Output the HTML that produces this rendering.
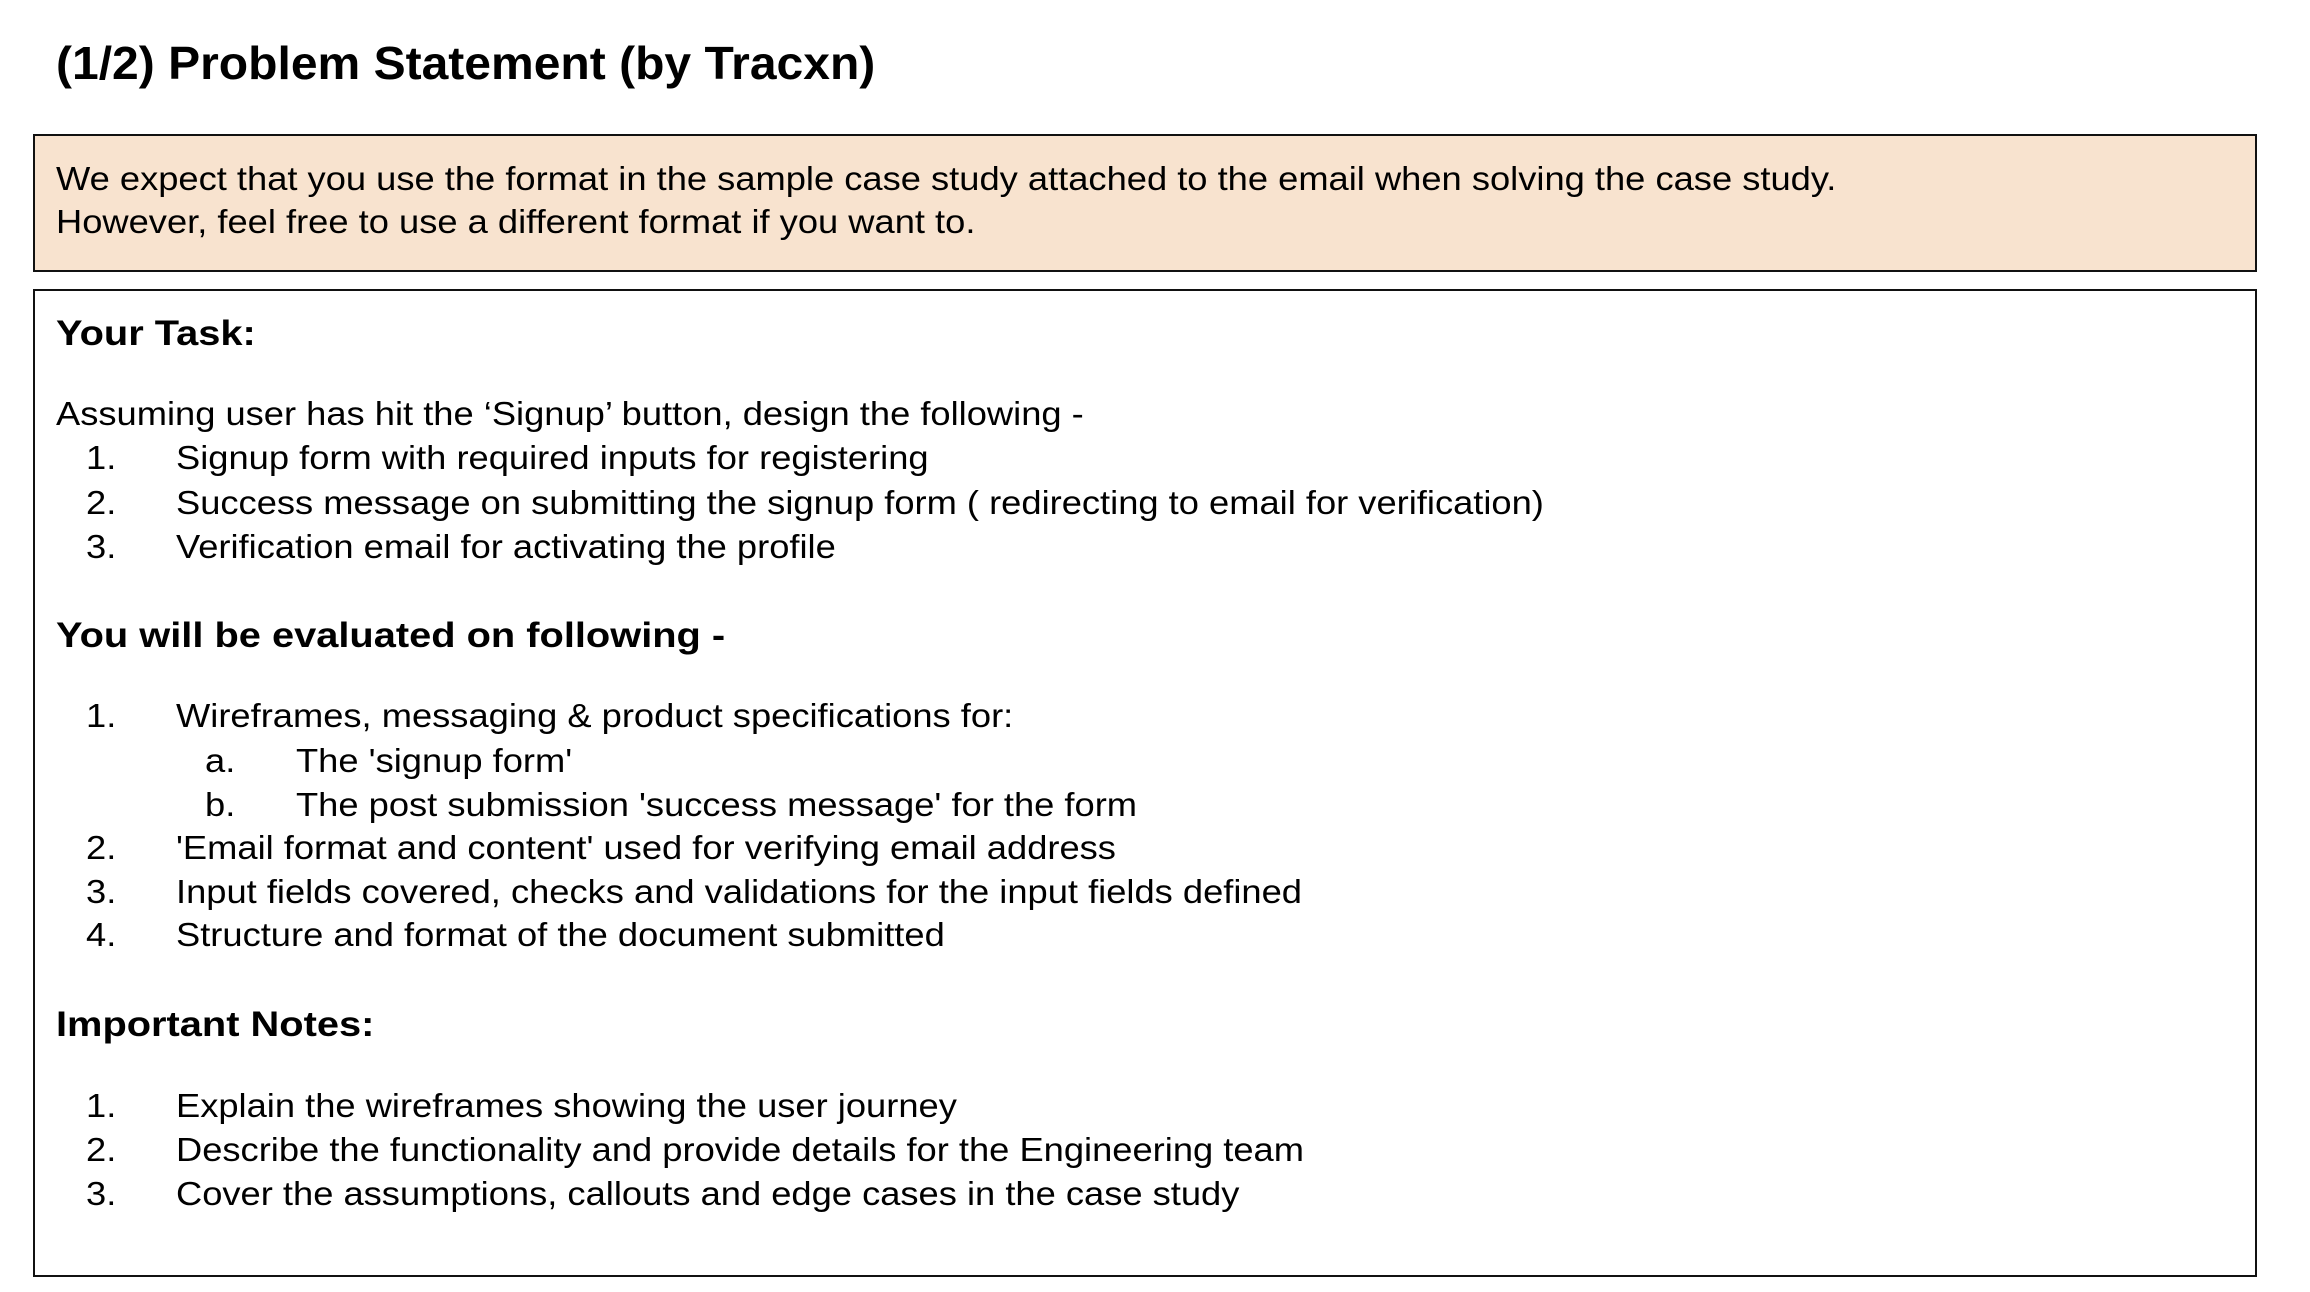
<!DOCTYPE html>
<html><head><meta charset="utf-8"><style>
body{margin:0;width:2310px;height:1292px;background:#fff;position:relative;font-family:"Liberation Sans",Arial,sans-serif;color:#000;overflow:hidden}
.l{position:absolute;white-space:nowrap;font-size:33px;line-height:44px;height:44px;transform-origin:0 50%;transform:scaleX(1.10)}
.b{font-weight:bold;font-size:35px;transform:scaleX(1.137)}
.box{position:absolute;border:2.5px solid #111;box-sizing:border-box}
</style></head><body>
<div class="l" style="left:56px;top:38px;font-size:46px;font-weight:bold;line-height:50px;height:50px;transform:scaleX(1.044)">(1/2) Problem Statement (by Tracxn)</div>
<div class="box" style="left:33px;top:134px;width:2224px;height:138px;background:#f8e3cf"></div>
<div class="l" style="left:56px;top:157px">We expect that you use the format in the sample case study attached to the email when solving the case study.</div>
<div class="l" style="left:56px;top:200px">However, feel free to use a different format if you want to.</div>
<div class="box" style="left:33px;top:289px;width:2224px;height:988px"></div>
<div class="l b" style="left:56px;top:312px">Your Task:</div>
<div class="l" style="left:56px;top:392px">Assuming user has hit the ‘Signup’ button, design the following -</div>
<div class="l" style="left:86px;top:436px">1.</div><div class="l" style="left:176px;top:436px">Signup form with required inputs for registering</div>
<div class="l" style="left:86px;top:481px">2.</div><div class="l" style="left:176px;top:481px">Success message on submitting the signup form ( redirecting to email for verification)</div>
<div class="l" style="left:86px;top:525px">3.</div><div class="l" style="left:176px;top:525px">Verification email for activating the profile</div>
<div class="l b" style="left:56px;top:614px">You will be evaluated on following -</div>
<div class="l" style="left:86px;top:694px">1.</div><div class="l" style="left:176px;top:694px">Wireframes, messaging &amp; product specifications for:</div>
<div class="l" style="left:205px;top:739px">a.</div><div class="l" style="left:296px;top:739px">The 'signup form'</div>
<div class="l" style="left:205px;top:783px">b.</div><div class="l" style="left:296px;top:783px">The post submission 'success message' for the form</div>
<div class="l" style="left:86px;top:826px">2.</div><div class="l" style="left:176px;top:826px">'Email format and content' used for verifying email address</div>
<div class="l" style="left:86px;top:870px">3.</div><div class="l" style="left:176px;top:870px">Input fields covered, checks and validations for the input fields defined</div>
<div class="l" style="left:86px;top:913px">4.</div><div class="l" style="left:176px;top:913px">Structure and format of the document submitted</div>
<div class="l b" style="left:56px;top:1003px">Important Notes:</div>
<div class="l" style="left:86px;top:1084px">1.</div><div class="l" style="left:176px;top:1084px">Explain the wireframes showing the user journey</div>
<div class="l" style="left:86px;top:1128px">2.</div><div class="l" style="left:176px;top:1128px">Describe the functionality and provide details for the Engineering team</div>
<div class="l" style="left:86px;top:1172px">3.</div><div class="l" style="left:176px;top:1172px">Cover the assumptions, callouts and edge cases in the case study</div>
</body></html>
